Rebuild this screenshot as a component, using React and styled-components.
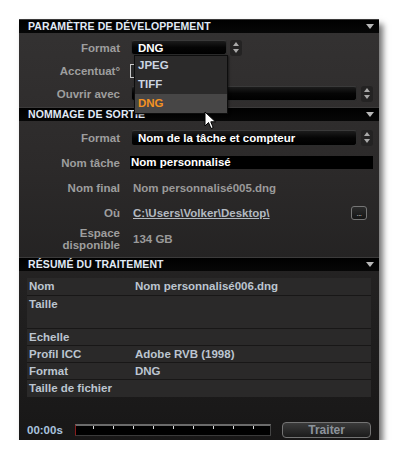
import React from "react";
import styled, { createGlobalStyle } from "styled-components";

const GlobalStyle = createGlobalStyle`
  body {
    margin: 0;
    background: #ffffff;
    font-family: "Liberation Sans", Arial, sans-serif;
  }
`;

const Page = styled.div`
  padding: 19px 0 0 19px;
`;

const Window = styled.div`
  position: relative;
  width: 360px;
  height: 421px;
  display: flex;
  flex-direction: column;
  background: linear-gradient(#343232 0%, #2c2a2a 35%, #201f1f 70%, #181717 100%);
  box-shadow: 4px 5px 6px rgba(0, 0, 0, 0.55);
`;

const SectionHeader = styled.div`
  height: 13px;
  border-top: 1px solid #3c3b3b;
  background: linear-gradient(#000 0%, #070707 100%);
  display: flex;
  align-items: center;
  justify-content: space-between;
  padding: 0 5px 0 9px;
  font-size: 10.5px;
  font-weight: bold;
  color: #e1eaf6;
  letter-spacing: 0.1px;
  line-height: 13px;
`;

const Caret = styled.span`
  width: 0;
  height: 0;
  border-left: 4px solid transparent;
  border-right: 4px solid transparent;
  border-top: 5px solid #b8b8b8;
`;

const FormGrid = styled.div`
  position: relative;
  display: grid;
  grid-template-columns: 101px 1fr;
  column-gap: 11px;
  grid-template-rows: ${(p) => p.$rows};
  padding: ${(p) => p.$pad};
`;

const Label = styled.div`
  align-self: center;
  text-align: right;
  color: #9e9e9e;
  font-size: 11.5px;
  font-weight: bold;
  line-height: 12px;
`;

const Cell = styled.div`
  position: relative;
  display: flex;
  align-items: center;
  gap: ${(p) => p.$gap || 0}px;
  padding-right: 7px;
`;

const Select = styled.div`
  box-sizing: border-box;
  width: ${(p) => p.$w}px;
  height: ${(p) => p.$h || 15}px;
  display: flex;
  align-items: center;
  padding-left: 6px;
  border: 1px solid #2c2c2c;
  border-top-color: #3a3a3a;
  border-radius: 3px;
  background: linear-gradient(#1c1c1c 0%, #050505 50%, #000 100%);
  color: #ffffff;
  font-size: 11.5px;
  font-weight: bold;
  white-space: nowrap;
  overflow: hidden;
`;

const Spinner = styled.div`
  width: 12px;
  height: 16px;
  border-radius: 3px;
  background: #242323;
  display: flex;
  flex-direction: column;
  align-items: center;
  justify-content: center;
  gap: 3px;
`;

const Tri = styled.span`
  width: 0;
  height: 0;
  border-left: 3px solid transparent;
  border-right: 3px solid transparent;
  ${(p) =>
    p.$up ? "border-bottom: 4px solid #a9a9a9;" : "border-top: 4px solid #a9a9a9;"}
`;

const SmallBox = styled.div`
  width: 12px;
  height: 12px;
  border: 1px solid #c9c9c9;
  background: #2a2a2a;
  margin-left: -1px;
`;

const Dropdown = styled.div`
  position: absolute;
  left: 3px;
  top: 19px;
  width: 92px;
  z-index: 2;
  background: #2b2a2a;
  border: 1px solid #0d0d0d;
  box-shadow: 1px 1px 2px rgba(0, 0, 0, 0.5);
`;

const Option = styled.div`
  height: 19px;
  line-height: 19px;
  padding-left: 3px;
  font-size: 11.5px;
  font-weight: bold;
  color: ${(p) => (p.$active ? "#f39222" : "#cdd6e2")};
  background: ${(p) => (p.$active ? "#474646" : "transparent")};
`;

const Cursor = styled.svg`
  position: absolute;
  left: 185px;
  top: 78px;
  z-index: 3;
`;

const TextInput = styled.div`
  width: 100%;
  height: 13px;
  margin-left: -1px;
  margin-right: -1px;
  background: #000;
  color: #fff;
  font-size: 11.5px;
  font-weight: bold;
  line-height: 13px;
  padding-left: 1px;
`;

const Plain = styled.div`
  color: ${(p) => p.$color || "#9a9a9a"};
  font-size: 11.5px;
  font-weight: bold;
  padding-left: 2px;
  text-decoration: ${(p) => (p.$link ? "underline" : "none")};
`;

const DotsButton = styled.div`
  margin-left: auto;
  margin-right: 6px;
  width: 14px;
  height: 12px;
  border: 1px solid #767676;
  border-radius: 3px;
  background: linear-gradient(#2c2c2c, #151515);
  color: #cfcfcf;
  font-size: 8px;
  line-height: 14px;
  text-align: center;
  letter-spacing: -0.5px;
`;

const SummaryBody = styled.div`
  flex: 1;
  display: flex;
  flex-direction: column;
  padding: 7px 8px 0;
`;

const Table = styled.div`
  display: flex;
  flex-direction: column;
`;

const Row = styled.div`
  box-sizing: border-box;
  height: ${(p) => p.$h}px;
  display: grid;
  grid-template-columns: 106px 1fr;
  padding-left: 2px;
  background: #2a2929;
  border-bottom: ${(p) => (p.$last ? "none" : "1px solid #181717")};
  color: #bcc5d0;
  font-size: 11.5px;
  font-weight: bold;
  line-height: 17px;
`;

const Footer = styled.div`
  margin-top: auto;
  display: flex;
  align-items: center;
  height: 16px;
  padding-bottom: 2px;
`;

const Time = styled.div`
  width: 48px;
  color: #a9c3df;
  font-size: 11.5px;
  font-weight: bold;
`;

const Progress = styled.div`
  box-sizing: border-box;
  width: 197px;
  height: 12px;
  border-top: 2px solid #6b6b6b;
  border-left: 1px solid #8a1c1c;
  border-right: 1px solid #444;
  border-bottom: 1px solid #3a3a3a;
  background-color: #000;
  background-image: repeating-linear-gradient(
    to right,
    transparent 0 17px,
    #d8d8d8 17px 18px,
    transparent 18px 20px
  );
  background-size: 100% 3px;
  background-repeat: no-repeat;
`;

const Button = styled.div`
  box-sizing: border-box;
  margin-left: 11px;
  width: 89px;
  height: 16px;
  border: 1px solid #747474;
  border-radius: 4px;
  background: linear-gradient(#3b3b3b, #1b1b1b);
  color: #8c939b;
  font-size: 12px;
  font-weight: bold;
  text-align: center;
  line-height: 14px;
`;

function SpinBox() {
  return (
    <Spinner>
      <Tri $up />
      <Tri />
    </Spinner>
  );
}

const summary = [
  { label: "Nom", value: "Nom personnalisé006.dng", h: 18 },
  { label: "Taille", value: "", h: 33 },
  { label: "Echelle", value: "", h: 17 },
  { label: "Profil ICC", value: "Adobe RVB (1998)", h: 17 },
  { label: "Format", value: "DNG", h: 17 },
  { label: "Taille de fichier", value: "", h: 17 },
];

export default function App() {
  return (
    <Page>
      <GlobalStyle />
      <Window>
        <SectionHeader>
          <span>PARAMÈTRE DE DÉVELOPPEMENT</span>
          <Caret />
        </SectionHeader>
        <FormGrid $rows="23px 23px 23px" $pad="3px 0 2px">
          <Label>Format</Label>
          <Cell $gap={3}>
            <Select $w={96}>DNG</Select>
            <SpinBox />
            <Dropdown>
              <Option>JPEG</Option>
              <Option>TIFF</Option>
              <Option $active>DNG</Option>
            </Dropdown>
          </Cell>
          <Label>Accentuat°</Label>
          <Cell>
            <SmallBox />
          </Cell>
          <Label>Ouvrir avec</Label>
          <Cell $gap={4}>
            <Select $w={226} />
            <SpinBox />
          </Cell>
          <Cursor width="13" height="19" viewBox="0 0 13 19">
            <path
              d="M1 1 L1 15 L4.5 11.5 L7 17.5 L9.2 16.6 L6.8 10.8 L11.5 10.8 Z"
              fill="#fff"
              stroke="#000"
              strokeWidth="1"
              strokeLinejoin="round"
            />
          </Cursor>
        </FormGrid>

        <SectionHeader>
          <span>NOMMAGE DE SORTIE</span>
          <Caret />
        </SectionHeader>
        <FormGrid $rows="25px 25px 25px 25px 28px" $pad="4px 0 4px">
          <Label>Format</Label>
          <Cell $gap={4}>
            <Select $w={226} $h={16}>
              Nom de la tâche et compteur
            </Select>
            <SpinBox />
          </Cell>
          <Label>Nom tâche</Label>
          <Cell>
            <TextInput>Nom personnalisé</TextInput>
          </Cell>
          <Label>Nom final</Label>
          <Cell>
            <Plain>Nom personnalisé005.dng</Plain>
          </Cell>
          <Label>Où</Label>
          <Cell>
            <Plain $link $color="#b3b9c0">
              C:\Users\Volker\Desktop\
            </Plain>
            <DotsButton>...</DotsButton>
          </Cell>
          <Label>
            Espace
            <br />
            disponible
          </Label>
          <Cell>
            <Plain>134 GB</Plain>
          </Cell>
        </FormGrid>

        <SectionHeader>
          <span>RÉSUMÉ DU TRAITEMENT</span>
          <Caret />
        </SectionHeader>
        <SummaryBody>
          <Table>
            {summary.map((r, i) => (
              <Row key={r.label} $h={r.h} $last={i === summary.length - 1}>
                <span>{r.label}</span>
                <span>{r.value}</span>
              </Row>
            ))}
          </Table>
          <Footer>
            <Time>00:00s</Time>
            <Progress />
            <Button>Traiter</Button>
          </Footer>
        </SummaryBody>
      </Window>
    </Page>
  );
}
